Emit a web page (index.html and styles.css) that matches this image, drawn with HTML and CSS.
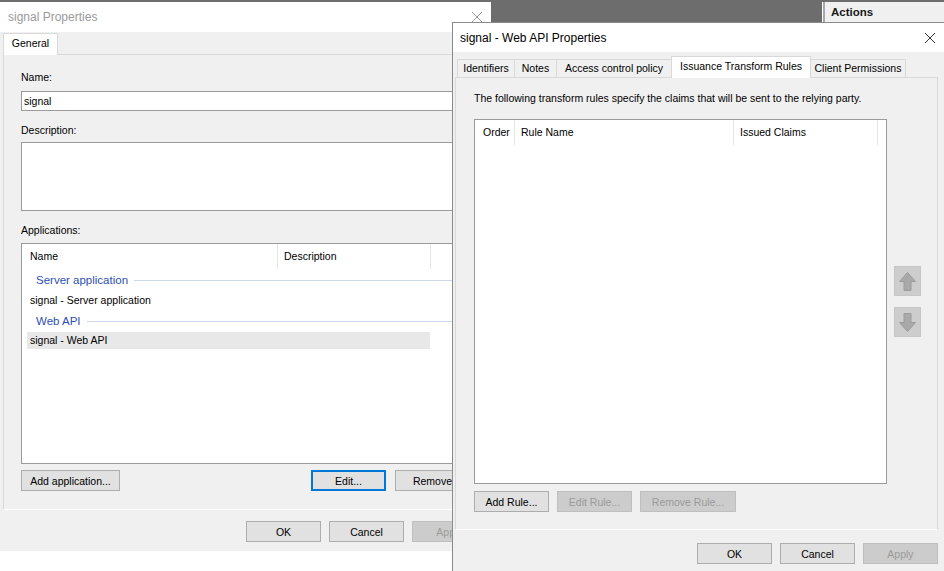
FILE: index.html
```html
<!DOCTYPE html>
<html>
<head>
<title>signal - Web API Properties</title>
<link rel="stylesheet" href="styles.css">
</head>
<body>
<div class="desktop">

    <div class="mmc-top">
        <div class="actions-pane">Actions</div>
    </div>

    <!-- back window: relying party group -->
    <div class="window win-general">
        <div class="titlebar">
            <span class="title">signal Properties</span>
            <svg class="close" width="10" height="10" viewBox="0 0 10 10"><path d="M0 0 L10 10 M10 0 L0 10" stroke="currentColor" stroke-width="1"/></svg>
        </div>
        <div class="tabs">
            <div class="tab selected t-general">General</div>
        </div>
        <div class="page">
            <div class="label">Name:</div>
            <div class="textbox">signal</div>
            <div class="label gap">Description:</div>
            <div class="textbox multi"></div>
            <div class="label gap">Applications:</div>
            <div class="listview apps">
                <div class="lv-head">
                    <div class="col c-name">Name</div>
                    <div class="col c-desc">Description</div>
                </div>
                <div class="lv-group">Server application</div>
                <div class="lv-item">signal - Server application</div>
                <div class="lv-group">Web API</div>
                <div class="lv-item selected">signal - Web API</div>
            </div>
            <div class="btn-row">
                <button class="btn w-add">Add application...</button>
                <button class="btn focus push-right">Edit...</button>
                <button class="btn">Remove</button>
            </div>
        </div>
        <div class="dlg-buttons">
            <button class="btn">OK</button>
            <button class="btn">Cancel</button>
            <button class="btn" disabled>Apply</button>
        </div>
    </div>

    <!-- front window -->
    <div class="window win-api">
        <div class="titlebar">
            <span class="title">signal - Web API Properties</span>
            <svg class="close" width="10" height="10" viewBox="0 0 10 10"><path d="M0 0 L10 10 M10 0 L0 10" stroke="currentColor" stroke-width="1"/></svg>
        </div>
        <div class="tabs">
            <div class="tab t-ids">Identifiers</div>
            <div class="tab t-notes">Notes</div>
            <div class="tab t-acp">Access control policy</div>
            <div class="tab selected t-itr">Issuance Transform Rules</div>
            <div class="tab t-cp">Client Permissions</div>
        </div>
        <div class="page">
            <div class="label intro">The following transform rules specify the claims that will be sent to the relying party.</div>
            <div class="rules-area">
                <div class="listview rules">
                    <div class="lv-head">
                        <div class="col c-order">Order</div>
                        <div class="col c-rule">Rule Name</div>
                        <div class="col c-claims">Issued Claims</div>
                    </div>
                </div>
                <div class="move-buttons">
                    <div class="move-btn">
                        <svg width="17" height="19" viewBox="0 0 17 19"><path d="M8.5 0.5 L16.5 9.5 H12 V18.5 H5 V9.5 H0.5 Z" fill="#a9a9a9" stroke="#9c9c9c"/></svg>
                    </div>
                    <div class="move-btn">
                        <svg width="17" height="19" viewBox="0 0 17 19"><path d="M8.5 18.5 L16.5 9.5 H12 V0.5 H5 V9.5 H0.5 Z" fill="#a9a9a9" stroke="#9c9c9c"/></svg>
                    </div>
                </div>
            </div>
            <div class="btn-row">
                <button class="btn">Add Rule...</button>
                <button class="btn" disabled>Edit Rule...</button>
                <button class="btn w-remove" disabled>Remove Rule...</button>
            </div>
        </div>
        <div class="dlg-buttons">
            <button class="btn">OK</button>
            <button class="btn">Cancel</button>
            <button class="btn" disabled>Apply</button>
        </div>
    </div>

</div>
</body>
</html>
```

FILE: styles.css
```css
* {
    box-sizing: border-box;
}

body {
    margin: 0;
    font-family: "Liberation Sans", Arial, sans-serif;
    font-size: 10.5px;
    color: #000;
    background: #fff;
}

.desktop {
    position: relative;
    width: 944px;
    height: 571px;
    overflow: hidden;
    background: #fff;
}

/* MMC console behind the dialogs */
.mmc-top {
    height: 22px;
    background: #6d6d6d;
    display: flex;
    justify-content: flex-end;
}

.actions-pane {
    width: 122px;
    margin-top: 2px;
    padding-left: 8px;
    background: #f0f0f0;
    border-left: 1px solid #fff;
    box-shadow: inset 2px 0 0 #a8a8a8;
    font-size: 11.5px;
    font-weight: bold;
    line-height: 20px;
    color: #1a1a1a;
}

/* dialogs */
.window {
    position: absolute;
    background: #f0f0f0;
    display: flex;
    flex-direction: column;
}

.win-general {
    left: 0;
    top: 2px;
    width: 491px;
    height: 549px;
}

.win-api {
    left: 452px;
    top: 22px;
    width: 492px;
    height: 549px;
    border-left: 1px solid #8a8a8a;
    border-top: 1px solid #8a8a8a;
}

.titlebar {
    height: 30px;
    flex: none;
    background: #fff;
    display: flex;
    align-items: center;
    justify-content: space-between;
    padding: 0 9px 0 8px;
    font-size: 12px;
}

.win-api .titlebar {
    height: 29px;
    padding-left: 7px;
}

.win-general .title,
.win-general .close {
    color: #9a9a9a;
}

.win-api .close {
    color: #333;
}

/* tabs */
.tabs {
    display: flex;
    align-items: flex-end;
    position: relative;
    z-index: 1;
    margin-bottom: -1px;
    flex: none;
}

.win-general .tabs {
    margin-top: 1px;
    padding-left: 3px;
}

.win-api .tabs {
    margin-top: 4px;
    padding-left: 4px;
}

.tab {
    height: 18px;
    margin-bottom: 1px;
    margin-right: -1px;
    border: 1px solid #d9d9d9;
    border-bottom: none;
    background: #f0f0f0;
    text-align: center;
    line-height: 17px;
    white-space: nowrap;
}

.tab.selected {
    height: 22px;
    margin-bottom: 0;
    background: #fff;
    line-height: 19px;
}

.t-general { width: 55px; height: 23px; line-height: 21px; }
.t-ids { width: 58px; }
.t-notes { width: 43px; }
.t-acp { width: 116px; }
.t-itr { width: 140px; }
.t-cp { width: 96px; }

.page {
    border: 1px solid #d9d9d9;
    border-bottom-color: #fff;
    background: #f0f0f0;
    display: flex;
    flex-direction: column;
    align-items: flex-start;
    flex: none;
}

.win-general .page {
    margin-left: 3px;
    width: 483px;
    padding: 16px 17px 18px 17px;
}

.win-api .page {
    margin-left: 2px;
    width: 483px;
    padding: 14px 18px 17px 18px;
}

.label {
    line-height: 13px;
    white-space: nowrap;
}

.label.gap {
    margin-top: 13px;
}

.textbox {
    width: 449px;
    height: 20px;
    margin-top: 7px;
    padding-left: 2px;
    border: 1px solid #9b9b9b;
    background: #fff;
    line-height: 18px;
}

.textbox.multi {
    height: 69px;
    margin-top: 5px;
}

/* list views */
.listview {
    border: 1px solid #9b9b9b;
    background: #fff;
    overflow: hidden;
}

.apps {
    width: 449px;
    height: 221px;
    margin-top: 6px;
}

.rules {
    width: 413px;
    height: 365px;
}

.lv-head {
    display: flex;
    height: 26px;
}

.col {
    height: 25px;
    padding-left: 7px;
    border-right: 1px solid #e5e5e5;
    line-height: 24px;
    white-space: nowrap;
}

.c-name { width: 256px; padding-left: 8px; }
.c-desc { width: 153px; padding-left: 6px; }
.c-order { width: 40px; padding-left: 8px; }
.c-rule { width: 219px; padding-left: 6px; }
.c-claims { width: 144px; padding-left: 6px; }

.lv-group {
    height: 20px;
    padding-left: 14px;
    display: flex;
    align-items: center;
    gap: 6px;
    font-size: 11.5px;
    color: #2c4fb3;
    white-space: nowrap;
}

.lv-group::after {
    content: "";
    flex: 1;
    border-top: 1px solid #ccd8ec;
}

.lv-item {
    width: 403px;
    height: 18px;
    margin: 1px 0 2px 5px;
    padding-left: 3px;
    line-height: 18px;
    white-space: nowrap;
}

.lv-item.selected {
    height: 17px;
    background: #e8e8e8;
    line-height: 17px;
}

.intro {
    margin-bottom: 14px;
}

.rules-area {
    display: flex;
    align-items: center;
    gap: 7px;
}

.move-buttons {
    display: flex;
    flex-direction: column;
    gap: 11px;
}

.move-btn {
    width: 27px;
    height: 30px;
    background: #cdcdcd;
    border: 1px solid #c6c6c6;
    display: flex;
    align-items: center;
    justify-content: center;
}

/* buttons */
.btn {
    width: 75px;
    height: 21px;
    padding: 0;
    border: 1px solid #adadad;
    background: #e1e1e1;
    font-family: inherit;
    font-size: inherit;
    color: #000;
    white-space: nowrap;
}

.btn:disabled {
    background: #cccccc;
    border-color: #bfbfbf;
    color: #9a9a9a;
}

.btn.focus {
    border-color: #0078d7;
    box-shadow: inset 0 0 0 1px #0078d7;
}

.w-add { width: 99px; }
.w-remove { width: 96px; }

.btn-row {
    display: flex;
    gap: 8px;
    margin-top: 7px;
    width: 100%;
}

.win-general .btn-row {
    margin-top: 6px;
    gap: 9px;
    width: calc(100% + 2px);
}

.push-right {
    margin-left: auto;
}

.dlg-buttons {
    display: flex;
    justify-content: flex-end;
    gap: 8px;
    flex: none;
}

.win-general .dlg-buttons {
    margin-top: 11px;
    padding-right: 4px;
}

.win-api .dlg-buttons {
    margin-top: 13px;
    padding-right: 6px;
}
```
